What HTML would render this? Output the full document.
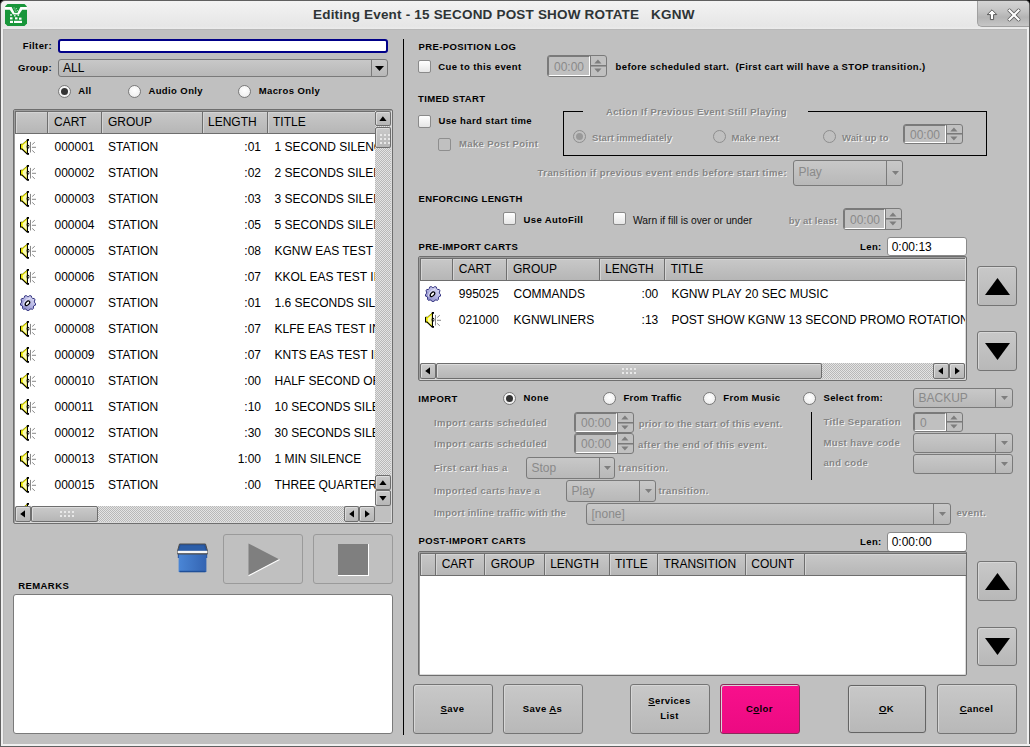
<!DOCTYPE html>
<html><head><meta charset="utf-8">
<style>
*{margin:0;padding:0;box-sizing:border-box}
html,body{width:1030px;height:747px;overflow:hidden;background:#c0c0c0;font-family:"Liberation Sans",sans-serif}
.a{position:absolute}
.t{position:absolute;white-space:nowrap;line-height:1;color:#000}
.b11{font-weight:bold;font-size:11px}
.b10{font-weight:bold;font-size:10px}
.r12{font-size:12px}
.dis{color:#858585;text-shadow:1px 1px 0 #f2f2f2}
.cb{position:absolute;width:13px;height:13px;border:1px solid #8a8a8a;border-radius:2px;background:linear-gradient(#fff,#e6e6e6)}
.cb.d{background:#c0c0c0;border-color:#8e8e8e}
.rd{position:absolute;width:13px;height:13px;border:1px solid #7a7a7a;border-radius:50%;background:radial-gradient(circle at 50% 40%,#fff 0,#f2f2f2 60%,#dcdcdc 100%)}
.rd.on::after{content:"";position:absolute;left:2px;top:2px;width:7px;height:7px;border-radius:50%;background:#333}
.rd.d{border-color:#8e8e8e;background:#c0c0c0}
.rd.d.on::after{background:#999;left:2px;top:2px}
.btn{position:absolute;border:1px solid #747474;border-radius:3px;background:linear-gradient(#c8c8c8,#b8b8b8);box-shadow:inset 1px 1px 0 #d6d6d6}
.spin{position:absolute;border:1px solid #7a7a7a;border-radius:3px;background:#c0c0c0}
.spin .f{position:absolute;left:0;top:0;bottom:0;border-left:1px solid #7a7a7a;border-top:1px solid #7a7a7a;border-bottom:1px solid #fff;border-right:1px solid #fff;border-radius:2px 0 0 2px;background:#c0c0c0}
.combo{position:absolute;border:1px solid #7a7a7a;border-radius:3px;background:linear-gradient(#c8c8c8,#b8b8b8)}
.combo .dv{position:absolute;top:0;bottom:0;width:1px;background:#7a7a7a}
.tbl{position:absolute;border:1px solid #6e6e6e;border-radius:2px;background:#fff;box-shadow:inset 1px 1px 0 #9c9c9c,inset -1px -1px 0 #dadada}
.hdr{position:absolute;background:linear-gradient(#c8c8c8,#b6b6b6);border-top:1px solid #6e6e6e;border-left:1px solid #6e6e6e;border-bottom:1px solid #6e6e6e;box-shadow:inset 1px 1px 0 #d4d4d4}
.hd{position:absolute;width:2px;border-left:1px solid #6e6e6e;border-right:1px solid #d4d4d4}
.hatch{background-color:#d0d0d0;background-image:repeating-conic-gradient(#b8b8b8 0 25%,#e4e4e4 0 50%);background-size:2px 2px}
.sep{position:absolute;background:#000}
.sb{position:absolute;border:1px solid #6e6e6e;border-radius:2px;background:linear-gradient(#cacaca,#b6b6b6);box-shadow:inset 1px 1px 0 #dcdcdc}
.grip{position:absolute;background-image:radial-gradient(circle,#e8e8e8 0.8px,transparent 1.1px);background-size:4px 4px}
.tc{font-size:12px}
.th{font-size:12px}
.flat{background:#c0c0c0;border-color:#9a9a9a;box-shadow:none}
</style></head><body>
<!-- window chrome -->
<div class="a" style="left:0;top:0;width:1030px;height:747px;background:#c0c0c0"></div>
<div class="a" style="left:0;top:0;width:6px;height:6px;background:#000"></div>
<div class="a" style="left:1024px;top:0;width:6px;height:6px;background:#000"></div>
<div class="a" style="left:0;top:0;width:1030px;height:29px;background:linear-gradient(#f3f3f3,#e6e6e6 90%,#ececec);border-top:1px solid #606060;border-left:1px solid #606060;border-right:1px solid #606060;border-radius:5px 5px 0 0"></div>
<div class="a" style="left:0;top:29px;width:3px;height:718px;background:linear-gradient(90deg,#606060 0,#606060 1px,#f0f0f0 1px,#ececec 3px)"></div>
<div class="a" style="left:3px;top:29px;width:1px;height:715px;background:#b8b8b8"></div>
<div class="a" style="left:3px;top:29px;width:1024px;height:1px;background:#b8b8b8"></div>
<div class="a" style="left:1027px;top:27px;width:3px;height:720px;background:linear-gradient(90deg,#f0f0f0 0,#f0f0f0 2px,#606060 2px)"></div>
<div class="a" style="left:0;top:744px;width:1030px;height:3px;background:linear-gradient(#f0f0f0 0,#f0f0f0 2px,#606060 2px)"></div>
<div class="a" style="left:0;top:29px;width:1px;height:718px;background:#606060"></div>
<div class="a" style="left:977px;top:1px;width:52px;height:26px;border-radius:0 4px 0 5px;background:linear-gradient(#d4d4d4,#c4c4c4 40%,#b4b4b4 65%,#c6c6c6);border-left:1px solid #a0a0a0;border-bottom:1px solid #a0a0a0"></div>

<svg width="0" height="0" style="position:absolute">
<defs>
<symbol id="spk" viewBox="0 0 16 16">
<path d="M0.5 5 H2.5 L7.5 0.8 V15.2 L2.5 10.5 H0.5Z" fill="#f4f000"/>
<path d="M2.8 6.2 L6.8 3 V13 L2.8 9.6Z" fill="#fbfbb8"/>
<path d="M0.5 5 V10 H2 L7.5 15.3" stroke="#000" stroke-width="1.1" fill="none"/>
<path d="M0.5 5 H2.5 L7.5 0.8" stroke="#6a6a00" stroke-width="0.7" fill="none"/>
<rect x="6.8" y="0" width="2.2" height="1.8" fill="#000"/>
<rect x="7.2" y="14" width="1.8" height="1.8" fill="#000"/>
<rect x="6.9" y="1" width="1.1" height="14" fill="#000"/>
<ellipse cx="8" cy="7.7" rx="1.4" ry="1.9" fill="#000"/><ellipse cx="8.3" cy="7.7" rx="0.5" ry="0.8" fill="#fff"/>
<rect x="10.1" y="2.9" width="0.9" height="10.6" fill="#7a7a7a"/>
<path d="M12.2 5.5 L14.8 3.2 M12 8.3 H16 M12.2 11.4 L14.8 13.8" stroke="#7a7a7a" stroke-width="0.9"/>
</symbol>
<symbol id="gear" viewBox="0 0 16 16">
<defs><linearGradient id="gg" x1="1" y1="0" x2="0" y2="1"><stop offset="0" stop-color="#e4e4f8"/><stop offset="0.45" stop-color="#b8b8e4"/><stop offset="1" stop-color="#7c7cc0"/></linearGradient></defs>
<path d="M14.59 7.68 L15.68 8.48 L15.39 10.17 L14.08 10.56 L13.26 11.99 L13.58 13.31 L12.26 14.41 L11.02 13.87 L9.46 14.44 L8.86 15.65 L7.14 15.65 L6.54 14.44 L4.98 13.87 L3.74 14.41 L2.42 13.31 L2.74 11.99 L1.92 10.56 L0.61 10.17 L0.32 8.48 L1.41 7.68 L1.70 6.05 L0.94 4.92 L1.80 3.43 L3.16 3.52 L4.42 2.45 L4.58 1.10 L6.19 0.52 L7.17 1.45 L8.83 1.45 L9.81 0.52 L11.42 1.10 L11.58 2.45 L12.84 3.52 L14.20 3.43 L15.06 4.92 L14.30 6.05Z" fill="url(#gg)" stroke="#30307e" stroke-width="1" stroke-linejoin="round"/>
<path d="M3.5 10.5 Q4 4.5 10 3.5" stroke="#e8e8fa" stroke-width="1" fill="none"/>
<ellipse cx="7.5" cy="8.3" rx="2.7" ry="1.6" transform="rotate(-45 7.5 8.3)" fill="#fff" stroke="#000" stroke-width="1.2"/>
</symbol>
<symbol id="upa" viewBox="0 0 10 6"><path d="M0 6 L5 0 L10 6Z" fill="#000"/></symbol>
</defs></svg>
<!-- app icon -->
<svg class="a" style="left:5px;top:4px" width="22" height="22" viewBox="0 0 22 22">
<path d="M2.5 0 H19.5 L22 2.5 V19.5 L19.5 22 H2.5 L0 19.5 V2.5Z" fill="#18963a"/>
<path d="M0 3 H6.6 L9.6 9 H12.4 L15.4 3 H22 V5.8 H17.2 L14 10.4 H8 L4.8 5.8 H0Z" fill="#fff"/>
<path d="M8.6 4 h1 M10.8 4.6 h1 M9.6 6 h1 M11.8 6.6 h1 M10.4 7.8 h1" stroke="#c8eccc" stroke-width="1"/>
<rect x="5" y="10.3" width="2" height="1.3" fill="#fff"/><rect x="9" y="11.2" width="1.6" height="1.2" fill="#fff"/><rect x="12.5" y="10.6" width="1.6" height="1.2" fill="#fff"/>
<rect x="5" y="13.3" width="2.5" height="2.1" fill="#fff"/><rect x="10" y="13.3" width="2.5" height="2.1" fill="#fff"/><rect x="14" y="13.6" width="2.5" height="2.1" fill="#fff"/>
<rect x="5" y="16.8" width="3" height="2.2" fill="#fff"/><rect x="9" y="16.8" width="8" height="2.2" fill="#fff"/>
</svg>
<!-- title buttons glyphs -->
<svg class="a" style="left:986px;top:9px" width="12" height="12" viewBox="0 0 12 12">
<path d="M6 0.8 L10.8 5.6 L7.6 5.6 L7.6 10.6 L4.4 10.6 L4.4 5.6 L1.2 5.6 Z" fill="#fff" stroke="#5a5a5a" stroke-width="1" stroke-linejoin="round"/>
</svg>
<svg class="a" style="left:1007px;top:8px" width="14" height="14" viewBox="0 0 14 14">
<path d="M2.5 2.5 L11.5 11.5 M11.5 2.5 L2.5 11.5" stroke="#5a5a5a" stroke-width="3.8" stroke-linecap="round"/>
<path d="M2.5 2.5 L11.5 11.5 M11.5 2.5 L2.5 11.5" stroke="#fff" stroke-width="2.2" stroke-linecap="square"/>
</svg>

<!-- LEFT PANEL -->
<div class="a" style="left:58px;top:39px;width:330px;height:14px;border:2px solid #000088;border-radius:3px;background:#fff"></div>
<div class="combo" style="left:58px;top:59px;width:330px;height:18px"><div class="dv" style="left:312px"></div></div>
<svg class="a" style="left:375px;top:66px" width="9" height="5"><path d="M0 0 H9 L4.5 5Z" fill="#000"/></svg>

<div class="rd on" style="left:58px;top:85px"></div>
<div class="rd" style="left:128px;top:85px"></div>
<div class="rd" style="left:238px;top:85px"></div>

<div class="tbl" style="left:13px;top:109px;width:380px;height:415px"></div>
<div class="a" style="left:0;top:0;width:375px;height:506px;overflow:hidden">
<div class="hdr" style="left:15px;top:111px;width:370px;height:23px"></div>
<div class="hd" style="left:47px;top:112px;height:21px"></div>
<div class="hd" style="left:101px;top:112px;height:21px"></div>
<div class="hd" style="left:202px;top:112px;height:21px"></div>
<div class="hd" style="left:267px;top:112px;height:21px"></div>
<div class="t th" style="left:54px;top:116px">CART</div>
<div class="t th" style="left:108px;top:116px">GROUP</div>
<div class="t th" style="left:208px;top:116px">LENGTH</div>
<div class="t th" style="left:273px;top:116px">TITLE</div>
</div>

<div class="a" style="left:0;top:0;width:375px;height:506px;overflow:hidden">
<svg class="a" style="left:20px;top:139px" width="16" height="16"><use href="#spk"/></svg>
<div class="t tc" style="left:54.5px;top:140.54px">000001</div>
<div class="t tc" style="left:108px;top:140.54px">STATION</div>
<div class="t tc" style="left:161px;width:100px;text-align:right;top:140.54px">:01</div>
<div class="t tc" style="left:274.5px;top:140.54px">1 SECOND SILENCE</div>
<svg class="a" style="left:20px;top:165px" width="16" height="16"><use href="#spk"/></svg>
<div class="t tc" style="left:54.5px;top:166.54px">000002</div>
<div class="t tc" style="left:108px;top:166.54px">STATION</div>
<div class="t tc" style="left:161px;width:100px;text-align:right;top:166.54px">:02</div>
<div class="t tc" style="left:274.5px;top:166.54px">2 SECONDS SILENCE</div>
<svg class="a" style="left:20px;top:191px" width="16" height="16"><use href="#spk"/></svg>
<div class="t tc" style="left:54.5px;top:192.54px">000003</div>
<div class="t tc" style="left:108px;top:192.54px">STATION</div>
<div class="t tc" style="left:161px;width:100px;text-align:right;top:192.54px">:03</div>
<div class="t tc" style="left:274.5px;top:192.54px">3 SECONDS SILENCE</div>
<svg class="a" style="left:20px;top:217px" width="16" height="16"><use href="#spk"/></svg>
<div class="t tc" style="left:54.5px;top:218.54px">000004</div>
<div class="t tc" style="left:108px;top:218.54px">STATION</div>
<div class="t tc" style="left:161px;width:100px;text-align:right;top:218.54px">:05</div>
<div class="t tc" style="left:274.5px;top:218.54px">5 SECONDS SILENCE</div>
<svg class="a" style="left:20px;top:243px" width="16" height="16"><use href="#spk"/></svg>
<div class="t tc" style="left:54.5px;top:244.54px">000005</div>
<div class="t tc" style="left:108px;top:244.54px">STATION</div>
<div class="t tc" style="left:161px;width:100px;text-align:right;top:244.54px">:08</div>
<div class="t tc" style="left:274.5px;top:244.54px">KGNW EAS TEST</div>
<svg class="a" style="left:20px;top:269px" width="16" height="16"><use href="#spk"/></svg>
<div class="t tc" style="left:54.5px;top:270.54px">000006</div>
<div class="t tc" style="left:108px;top:270.54px">STATION</div>
<div class="t tc" style="left:161px;width:100px;text-align:right;top:270.54px">:07</div>
<div class="t tc" style="left:274.5px;top:270.54px">KKOL EAS TEST IN</div>
<svg class="a" style="left:20px;top:295px" width="16" height="16"><use href="#gear"/></svg>
<div class="t tc" style="left:54.5px;top:296.54px">000007</div>
<div class="t tc" style="left:108px;top:296.54px">STATION</div>
<div class="t tc" style="left:161px;width:100px;text-align:right;top:296.54px">:01</div>
<div class="t tc" style="left:274.5px;top:296.54px">1.6 SECONDS SILENCE</div>
<svg class="a" style="left:20px;top:321px" width="16" height="16"><use href="#spk"/></svg>
<div class="t tc" style="left:54.5px;top:322.54px">000008</div>
<div class="t tc" style="left:108px;top:322.54px">STATION</div>
<div class="t tc" style="left:161px;width:100px;text-align:right;top:322.54px">:07</div>
<div class="t tc" style="left:274.5px;top:322.54px">KLFE EAS TEST IN</div>
<svg class="a" style="left:20px;top:347px" width="16" height="16"><use href="#spk"/></svg>
<div class="t tc" style="left:54.5px;top:348.54px">000009</div>
<div class="t tc" style="left:108px;top:348.54px">STATION</div>
<div class="t tc" style="left:161px;width:100px;text-align:right;top:348.54px">:07</div>
<div class="t tc" style="left:274.5px;top:348.54px">KNTS EAS TEST IN</div>
<svg class="a" style="left:20px;top:373px" width="16" height="16"><use href="#spk"/></svg>
<div class="t tc" style="left:54.5px;top:374.54px">000010</div>
<div class="t tc" style="left:108px;top:374.54px">STATION</div>
<div class="t tc" style="left:161px;width:100px;text-align:right;top:374.54px">:00</div>
<div class="t tc" style="left:274.5px;top:374.54px">HALF SECOND OF</div>
<svg class="a" style="left:20px;top:399px" width="16" height="16"><use href="#spk"/></svg>
<div class="t tc" style="left:54.5px;top:400.54px">000011</div>
<div class="t tc" style="left:108px;top:400.54px">STATION</div>
<div class="t tc" style="left:161px;width:100px;text-align:right;top:400.54px">:10</div>
<div class="t tc" style="left:274.5px;top:400.54px">10 SECONDS SILENCE</div>
<svg class="a" style="left:20px;top:425px" width="16" height="16"><use href="#spk"/></svg>
<div class="t tc" style="left:54.5px;top:426.54px">000012</div>
<div class="t tc" style="left:108px;top:426.54px">STATION</div>
<div class="t tc" style="left:161px;width:100px;text-align:right;top:426.54px">:30</div>
<div class="t tc" style="left:274.5px;top:426.54px">30 SECONDS SILENCE</div>
<svg class="a" style="left:20px;top:451px" width="16" height="16"><use href="#spk"/></svg>
<div class="t tc" style="left:54.5px;top:452.54px">000013</div>
<div class="t tc" style="left:108px;top:452.54px">STATION</div>
<div class="t tc" style="left:161px;width:100px;text-align:right;top:452.54px">1:00</div>
<div class="t tc" style="left:274.5px;top:452.54px">1 MIN SILENCE</div>
<svg class="a" style="left:20px;top:477px" width="16" height="16"><use href="#spk"/></svg>
<div class="t tc" style="left:54.5px;top:478.54px">000015</div>
<div class="t tc" style="left:108px;top:478.54px">STATION</div>
<div class="t tc" style="left:161px;width:100px;text-align:right;top:478.54px">:00</div>
<div class="t tc" style="left:274.5px;top:478.54px">THREE QUARTER</div>
<svg class="a" style="left:20px;top:503px" width="16" height="16"><use href="#spk"/></svg>
</div>
<!-- left table scrollbars -->
<div class="a hatch" style="left:375px;top:111px;width:16px;height:395px"></div>
<div class="sb" style="left:375px;top:111px;width:16px;height:15px"><svg class="a" style="left:3px;top:4px" width="8" height="5"><path d="M0.3 5 L3.9 0.2 L7.5 5Z" fill="#000"/></svg></div>
<div class="sb" style="left:375px;top:127px;width:16px;height:21px"><div class="grip" style="left:3px;top:5px;width:11px;height:11px"></div></div>
<div class="sb" style="left:375px;top:475px;width:16px;height:15px"><svg class="a" style="left:3px;top:4px" width="8" height="5"><path d="M0.3 5 L3.9 0.2 L7.5 5Z" fill="#000"/></svg></div>
<div class="sb" style="left:375px;top:490px;width:16px;height:16px"><svg class="a" style="left:3px;top:5px" width="8" height="5"><path d="M0.3 0 L3.9 4.8 L7.5 0Z" fill="#000"/></svg></div>
<div class="a hatch" style="left:15px;top:506px;width:360px;height:16px"></div>
<div class="sb" style="left:15px;top:506px;width:16px;height:16px"><svg class="a" style="left:4px;top:3px" width="5" height="8"><path d="M5 0.3 L0.2 3.9 L5 7.5Z" fill="#000"/></svg></div>
<div class="sb" style="left:31px;top:506px;width:67px;height:16px"><div class="grip" style="left:27px;top:3px;width:17px;height:9px"></div></div>
<div class="sb" style="left:344px;top:506px;width:15px;height:16px"><svg class="a" style="left:4px;top:3px" width="5" height="8"><path d="M5 0.3 L0.2 3.9 L5 7.5Z" fill="#000"/></svg></div>
<div class="sb" style="left:359px;top:506px;width:16px;height:16px"><svg class="a" style="left:5px;top:3px" width="5" height="8"><path d="M0 0.3 L4.8 3.9 L0 7.5Z" fill="#000"/></svg></div>
<div class="a" style="left:375px;top:506px;width:16px;height:16px;background:#c0c0c0"></div>

<!-- trash -->
<svg class="a" style="left:174px;top:538px" width="38" height="40" viewBox="0 0 38 40">
<defs><linearGradient id="tg" x1="0" y1="0" x2="1" y2="0"><stop offset="0" stop-color="#4a86d6"/><stop offset="1" stop-color="#3464b2"/></linearGradient></defs>
<rect x="4.6" y="15.5" width="27.8" height="18.5" fill="url(#tg)"/>
<rect x="5.5" y="32.8" width="26" height="1.5" fill="#1f4f98"/>
<rect x="3.8" y="15.5" width="1.2" height="4.5" fill="#2a5aa8"/><rect x="32" y="15.5" width="1.2" height="4.5" fill="#2a5aa8"/>
<path d="M5.5 6 H31.5 L33.5 13 V15.8 H3.5 V13Z" fill="#24539c" stroke="#4e4e4e" stroke-width="1"/>
<path d="M6.5 7.5 H30 L31.5 12.5 H5Z" fill="#2c5ea8"/>
<rect x="3.6" y="12.8" width="29.8" height="2.6" fill="#f6f6f6"/>
<rect x="3.6" y="15.4" width="29.8" height="0.9" fill="#4e4e4e"/>
</svg>
<!-- play / stop -->
<div class="btn flat" style="left:223px;top:534px;width:80px;height:50px"></div>
<svg class="a" style="left:248px;top:543px" width="33" height="34" viewBox="0 0 33 34">
<path d="M0.5 0.5 L31.5 16.5 L0.5 32.5Z" fill="#7f7f7f"/>
<path d="M0.5 32.8 L31.5 16.5" stroke="#fff" stroke-width="1.2"/>
</svg>
<div class="btn flat" style="left:313px;top:534px;width:80px;height:50px"></div>
<div class="a" style="left:338px;top:544px;width:31px;height:32px;background:#7f7f7f;border-right:1px solid #fff;border-bottom:1px solid #fff"></div>

<div class="a" style="left:13px;top:594px;width:380px;height:140px;border:1px solid #7a7a7a;border-radius:3px;background:#fff"></div>

<!-- separator -->
<div class="sep" style="left:403px;top:39px;width:1px;height:696px"></div>

<div class="t " style="top:7.87px;font-size:13.5px;letter-spacing:0.19px;font-weight:bold;left:313px;color:#2e3436">Editing Event - 15 SECOND POST SHOW ROTATE &nbsp;&nbsp;KGNW</div>
<div class="t " style="top:40.66px;font-size:9.5px;letter-spacing:0.4px;font-weight:bold;left:-248px;width:300px;text-align:right;">Filter:</div>
<div class="t " style="top:62.66px;font-size:9.5px;letter-spacing:0.4px;font-weight:bold;left:-248px;width:300px;text-align:right;">Group:</div>
<div class="t " style="top:61.64px;font-size:12px;left:63px;">ALL</div>
<div class="t " style="top:85.76px;font-size:9.5px;letter-spacing:0.4px;font-weight:bold;left:78.3px;">All</div>
<div class="t " style="top:85.76px;font-size:9.5px;letter-spacing:0.4px;font-weight:bold;left:148.4px;">Audio Only</div>
<div class="t " style="top:85.76px;font-size:9.5px;letter-spacing:0.4px;font-weight:bold;left:258.7px;">Macros Only</div>
<div class="t " style="top:580.66px;font-size:9.5px;letter-spacing:0.4px;font-weight:bold;left:18.3px;">REMARKS</div>
<div class="t " style="top:41.96px;font-size:9.5px;letter-spacing:0.4px;font-weight:bold;left:418.5px;">PRE-POSITION LOG</div>
<div class="cb" style="left:418px;top:60px"></div>
<div class="t " style="top:62.36px;font-size:9.5px;letter-spacing:0.4px;font-weight:bold;left:438.2px;">Cue to this event</div>
<div class="spin" style="left:547px;top:55px;width:60px;height:22px"><div class="f" style="width:42px"></div><div class="a" style="left:42px;top:0;width:1px;height:20px;background:#7a7a7a"></div><div class="a" style="left:43px;top:9.0px;width:15px;height:2px;background:linear-gradient(#7a7a7a 50%,#9a9a9a 50%)"></div><svg class="a" style="left:46px;top:2.8px" width="8" height="5"><path d="M0.3 4.5 L3.9 0.5 L7.5 4.5Z" fill="#7e7e7e"/></svg><svg class="a" style="left:46px;top:12.0px" width="8" height="5"><path d="M0.3 0.5 L3.9 4.5 L7.5 0.5Z" fill="#7e7e7e"/></svg></div><div class="t " style="top:60.84px;font-size:12px;left:554px;color:#8a8a8a">00:00</div>
<div class="t " style="top:61.96px;font-size:9.5px;letter-spacing:0.4px;font-weight:bold;left:615.6px;">before scheduled start.&nbsp; (First cart will have a STOP transition.)</div>
<div class="t " style="top:93.96px;font-size:9.5px;letter-spacing:0.4px;font-weight:bold;left:418px;">TIMED START</div>
<div class="cb" style="left:418px;top:115px"></div>
<div class="t " style="top:115.96px;font-size:9.5px;letter-spacing:0.4px;font-weight:bold;left:438.4px;">Use hard start time</div>
<div class="cb d" style="left:438px;top:138px"></div>
<div class="t dis" style="top:139.46px;font-size:9.5px;letter-spacing:0.4px;font-weight:bold;left:458.9px;">Make Post Point</div>
<div class="a" style="left:563px;top:111px;width:424px;height:45px;border:1px solid #000;border-top:none"></div>
<div class="a" style="left:563px;top:111px;width:20px;height:1px;background:#000"></div>
<div class="a" style="left:808px;top:111px;width:179px;height:1px;background:#000"></div>
<div class="t dis" style="top:106.76px;font-size:9.5px;letter-spacing:0.4px;font-weight:bold;left:605.9px;">Action If Previous Event Still Playing</div>
<div class="rd on d" style="left:572.9px;top:129.8px"></div>
<div class="t dis" style="top:132.56px;font-size:9.5px;letter-spacing:0.05px;font-weight:bold;left:592px;">Start immediately</div>
<div class="rd d" style="left:712.7px;top:129.8px"></div>
<div class="t dis" style="top:132.56px;font-size:9.5px;letter-spacing:0.15px;font-weight:bold;left:731.5px;">Make next</div>
<div class="rd d" style="left:823.1px;top:129.8px"></div>
<div class="t dis" style="top:132.56px;font-size:9.5px;letter-spacing:0.1px;font-weight:bold;left:842px;">Wait up to</div>
<div class="spin" style="left:903px;top:124px;width:60px;height:20px"><div class="f" style="width:42px"></div><div class="a" style="left:42px;top:0;width:1px;height:18px;background:#7a7a7a"></div><div class="a" style="left:43px;top:8.0px;width:15px;height:2px;background:linear-gradient(#7a7a7a 50%,#9a9a9a 50%)"></div><svg class="a" style="left:46px;top:1.7999999999999998px" width="8" height="5"><path d="M0.3 4.5 L3.9 0.5 L7.5 4.5Z" fill="#7e7e7e"/></svg><svg class="a" style="left:46px;top:11.0px" width="8" height="5"><path d="M0.3 0.5 L3.9 4.5 L7.5 0.5Z" fill="#7e7e7e"/></svg></div><div class="t " style="top:128.84px;font-size:12px;left:910px;color:#8a8a8a">00:00</div>
<div class="t dis" style="top:168.46px;font-size:9.5px;letter-spacing:0.4px;font-weight:bold;left:487px;width:300px;text-align:right;">Transition if previous event ends before start time:</div>
<div class="combo" style="left:793px;top:160px;width:110px;height:26px"><div class="dv" style="left:92px"></div></div><svg class="a" style="left:891.5px;top:170.7px" width="7" height="4"><path d="M0 0 H7 L3.5 4Z" fill="#7e7e7e"/></svg><div class="t " style="top:165.94px;font-size:12px;left:798.5px;color:#8a8a8a">Play</div>
<div class="t " style="top:193.96px;font-size:9.5px;letter-spacing:0.33px;font-weight:bold;left:418.6px;">ENFORCING LENGTH</div>
<div class="cb" style="left:503px;top:212px"></div>
<div class="t " style="top:214.96px;font-size:9.5px;letter-spacing:0.4px;font-weight:bold;left:523.5px;">Use AutoFill</div>
<div class="cb" style="left:613px;top:212px"></div>
<div class="t " style="top:216.28px;font-size:10.3px;left:633px;color:#111">Warn if fill is over or under</div>
<div class="t dis" style="top:216.26px;font-size:9.5px;letter-spacing:0.2px;font-weight:bold;left:788.7px;">by at least</div>
<div class="spin" style="left:843px;top:208px;width:59px;height:22px"><div class="f" style="width:41px"></div><div class="a" style="left:41px;top:0;width:1px;height:20px;background:#7a7a7a"></div><div class="a" style="left:42px;top:9.0px;width:15px;height:2px;background:linear-gradient(#7a7a7a 50%,#9a9a9a 50%)"></div><svg class="a" style="left:45px;top:2.8px" width="8" height="5"><path d="M0.3 4.5 L3.9 0.5 L7.5 4.5Z" fill="#7e7e7e"/></svg><svg class="a" style="left:45px;top:12.0px" width="8" height="5"><path d="M0.3 0.5 L3.9 4.5 L7.5 0.5Z" fill="#7e7e7e"/></svg></div><div class="t " style="top:213.84px;font-size:12px;left:850px;color:#8a8a8a">00:00</div>
<div class="t " style="top:241.96px;font-size:9.5px;letter-spacing:0.28px;font-weight:bold;left:418.6px;">PRE-IMPORT CARTS</div>
<div class="t " style="top:241.96px;font-size:9.5px;letter-spacing:0.4px;font-weight:bold;left:860px;">Len:</div>
<div class="a" style="left:887px;top:237px;width:80px;height:19px;border:1px solid #8a8a8a;border-radius:3px;background:#fff"></div>
<div class="t " style="top:240.84px;font-size:12px;left:891.7px;">0:00:13</div>
<div class="tbl" style="left:418px;top:256px;width:549px;height:125px"></div>
<div class="a" style="left:0;top:0;width:965px;height:363px;overflow:hidden">
<div class="hdr" style="left:420px;top:258px;width:546px;height:23px"></div>
<div class="hd" style="left:452px;top:259px;height:21px"></div>
<div class="hd" style="left:506px;top:259px;height:21px"></div>
<div class="hd" style="left:599px;top:259px;height:21px"></div>
<div class="hd" style="left:664px;top:259px;height:21px"></div>
<div class="t th" style="top:262.84px;font-size:12px;left:458.8px;">CART</div>
<div class="t th" style="top:262.84px;font-size:12px;left:513px;">GROUP</div>
<div class="t th" style="top:262.84px;font-size:12px;left:605px;">LENGTH</div>
<div class="t th" style="top:262.84px;font-size:12px;left:670.7px;">TITLE</div>
<svg class="a" style="left:425px;top:286px" width="16" height="16"><use href="#gear"/></svg>
<svg class="a" style="left:425px;top:312px" width="16" height="16"><use href="#spk"/></svg>
<div class="t " style="top:287.54px;font-size:12px;left:458.8px;">995025</div>
<div class="t " style="top:287.54px;font-size:12px;left:513.6px;">COMMANDS</div>
<div class="t " style="top:287.54px;font-size:12px;left:358.29999999999995px;width:300px;text-align:right;">:00</div>
<div class="t " style="top:287.54px;font-size:12px;left:671.4px;">KGNW PLAY 20 SEC MUSIC</div>
<div class="t " style="top:313.54px;font-size:12px;left:458.8px;">021000</div>
<div class="t " style="top:313.54px;font-size:12px;left:513.6px;">KGNWLINERS</div>
<div class="t " style="top:313.54px;font-size:12px;left:358.29999999999995px;width:300px;text-align:right;">:13</div>
<div class="t " style="top:313.54px;font-size:12px;left:671.4px;">POST SHOW KGNW 13 SECOND PROMO ROTATION</div>
</div>
<div class="a hatch" style="left:420px;top:363px;width:545px;height:16px"></div>
<div class="sb" style="left:420px;top:363px;width:16px;height:16px"><svg class="a" style="left:4px;top:3px" width="5" height="8"><path d="M5 0.3 L0.2 3.9 L5 7.5Z" fill="#000"/></svg></div>
<div class="sb" style="left:436px;top:363px;width:386px;height:16px"><div class="grip" style="left:184px;top:3px;width:17px;height:9px"></div></div>
<div class="sb" style="left:933px;top:363px;width:16px;height:16px"><svg class="a" style="left:4px;top:3px" width="5" height="8"><path d="M5 0.3 L0.2 3.9 L5 7.5Z" fill="#000"/></svg></div>
<div class="sb" style="left:949px;top:363px;width:16px;height:16px"><svg class="a" style="left:5px;top:3px" width="5" height="8"><path d="M0 0.3 L4.8 3.9 L0 7.5Z" fill="#000"/></svg></div>
<div class="btn " style="left:977px;top:266px;width:40px;height:40px;"></div>
<svg class="a" style="left:985px;top:278px" width="25" height="17"><path d="M0 17 L12.5 0 L25 17Z" fill="#000"/></svg>
<div class="btn " style="left:977px;top:331px;width:40px;height:40px;"></div>
<svg class="a" style="left:985px;top:343px" width="25" height="17"><path d="M0 0 L12.5 17 L25 0Z" fill="#000"/></svg>
<div class="t " style="top:393.96px;font-size:9.5px;letter-spacing:0.4px;font-weight:bold;left:418.3px;">IMPORT</div>
<div class="rd on" style="left:503.1px;top:391.8px"></div>
<div class="t " style="top:392.96px;font-size:9.5px;letter-spacing:0.4px;font-weight:bold;left:523.5px;">None</div>
<div class="rd" style="left:603.0px;top:391.8px"></div>
<div class="t " style="top:392.96px;font-size:9.5px;letter-spacing:0.3px;font-weight:bold;left:623.4px;">From Traffic</div>
<div class="rd" style="left:702.7px;top:391.8px"></div>
<div class="t " style="top:392.96px;font-size:9.5px;letter-spacing:0.4px;font-weight:bold;left:723.2px;">From Music</div>
<div class="rd" style="left:802.5px;top:391.8px"></div>
<div class="t " style="top:392.96px;font-size:9.5px;letter-spacing:0.4px;font-weight:bold;left:823.4px;">Select from:</div>
<div class="combo" style="left:913px;top:388px;width:100px;height:20px"><div class="dv" style="left:81px"></div></div><svg class="a" style="left:1001.0px;top:395.7px" width="7" height="4"><path d="M0 0 H7 L3.5 4Z" fill="#7e7e7e"/></svg><div class="t " style="top:392.14px;font-size:12px;left:918.5px;color:#8a8a8a">BACKUP</div>
<div class="t dis" style="top:417.96px;font-size:9.5px;letter-spacing:0.4px;font-weight:bold;left:434px;">Import carts scheduled</div>
<div class="t dis" style="top:439.16px;font-size:9.5px;letter-spacing:0.4px;font-weight:bold;left:434px;">Import carts scheduled</div>
<div class="spin" style="left:574px;top:412px;width:60px;height:21px"><div class="f" style="width:42px"></div><div class="a" style="left:42px;top:0;width:1px;height:19px;background:#7a7a7a"></div><div class="a" style="left:43px;top:8.5px;width:15px;height:2px;background:linear-gradient(#7a7a7a 50%,#9a9a9a 50%)"></div><svg class="a" style="left:46px;top:2.3px" width="8" height="5"><path d="M0.3 4.5 L3.9 0.5 L7.5 4.5Z" fill="#7e7e7e"/></svg><svg class="a" style="left:46px;top:11.5px" width="8" height="5"><path d="M0.3 0.5 L3.9 4.5 L7.5 0.5Z" fill="#7e7e7e"/></svg></div><div class="t " style="top:417.34px;font-size:12px;left:581px;color:#8a8a8a">00:00</div>
<div class="spin" style="left:574px;top:433px;width:60px;height:21px"><div class="f" style="width:42px"></div><div class="a" style="left:42px;top:0;width:1px;height:19px;background:#7a7a7a"></div><div class="a" style="left:43px;top:8.5px;width:15px;height:2px;background:linear-gradient(#7a7a7a 50%,#9a9a9a 50%)"></div><svg class="a" style="left:46px;top:2.3px" width="8" height="5"><path d="M0.3 4.5 L3.9 0.5 L7.5 4.5Z" fill="#7e7e7e"/></svg><svg class="a" style="left:46px;top:11.5px" width="8" height="5"><path d="M0.3 0.5 L3.9 4.5 L7.5 0.5Z" fill="#7e7e7e"/></svg></div><div class="t " style="top:438.34px;font-size:12px;left:581px;color:#8a8a8a">00:00</div>
<div class="t dis" style="top:418.66px;font-size:9.5px;letter-spacing:0.27px;font-weight:bold;left:638.8px;">prior to the start of this event.</div>
<div class="t dis" style="top:439.66px;font-size:9.5px;letter-spacing:0.4px;font-weight:bold;left:638.1px;">after the end of this event.</div>
<div class="sep" style="left:811px;top:412px;width:1px;height:68px"></div>
<div class="t dis" style="top:417.16px;font-size:9.5px;letter-spacing:0.4px;font-weight:bold;left:823.4px;">Title Separation</div>
<div class="spin" style="left:913px;top:412px;width:50px;height:20px"><div class="f" style="width:32px"></div><div class="a" style="left:32px;top:0;width:1px;height:18px;background:#7a7a7a"></div><div class="a" style="left:33px;top:8.0px;width:15px;height:2px;background:linear-gradient(#7a7a7a 50%,#9a9a9a 50%)"></div><svg class="a" style="left:36px;top:1.7999999999999998px" width="8" height="5"><path d="M0.3 4.5 L3.9 0.5 L7.5 4.5Z" fill="#7e7e7e"/></svg><svg class="a" style="left:36px;top:11.0px" width="8" height="5"><path d="M0.3 0.5 L3.9 4.5 L7.5 0.5Z" fill="#7e7e7e"/></svg></div><div class="t " style="top:416.84px;font-size:12px;left:920px;color:#8a8a8a">0</div>
<div class="t dis" style="top:437.66px;font-size:9.5px;letter-spacing:0.4px;font-weight:bold;left:823.4px;">Must have code</div>
<div class="combo" style="left:913px;top:433px;width:100px;height:20px"><div class="dv" style="left:81px"></div></div><svg class="a" style="left:1001.0px;top:440.7px" width="7" height="4"><path d="M0 0 H7 L3.5 4Z" fill="#7e7e7e"/></svg>
<div class="t dis" style="top:458.46px;font-size:9.5px;letter-spacing:0.4px;font-weight:bold;left:823.4px;">and code</div>
<div class="combo" style="left:913px;top:454px;width:100px;height:20px"><div class="dv" style="left:81px"></div></div><svg class="a" style="left:1001.0px;top:461.7px" width="7" height="4"><path d="M0 0 H7 L3.5 4Z" fill="#7e7e7e"/></svg>
<div class="t dis" style="top:462.96px;font-size:9.5px;letter-spacing:0.4px;font-weight:bold;left:433.7px;">First cart has a</div>
<div class="combo" style="left:526px;top:457px;width:89px;height:22px"><div class="dv" style="left:72px"></div></div><svg class="a" style="left:604.0px;top:465.7px" width="7" height="4"><path d="M0 0 H7 L3.5 4Z" fill="#7e7e7e"/></svg><div class="t " style="top:461.74px;font-size:12px;left:531.5px;color:#8a8a8a">Stop</div>
<div class="t dis" style="top:463.36px;font-size:9.5px;letter-spacing:0.4px;font-weight:bold;left:618.3px;">transition.</div>
<div class="t dis" style="top:485.66px;font-size:9.5px;letter-spacing:0.4px;font-weight:bold;left:433.7px;">Imported carts have a</div>
<div class="combo" style="left:566px;top:480px;width:90px;height:22px"><div class="dv" style="left:72px"></div></div><svg class="a" style="left:644.5px;top:488.7px" width="7" height="4"><path d="M0 0 H7 L3.5 4Z" fill="#7e7e7e"/></svg><div class="t " style="top:484.74px;font-size:12px;left:571.5px;color:#8a8a8a">Play</div>
<div class="t dis" style="top:485.66px;font-size:9.5px;letter-spacing:0.4px;font-weight:bold;left:658.4px;">transition.</div>
<div class="t dis" style="top:508.36px;font-size:9.5px;letter-spacing:0.26px;font-weight:bold;left:433.7px;">Import inline traffic with the</div>
<div class="combo" style="left:586px;top:503px;width:365px;height:22px"><div class="dv" style="left:346px"></div></div><svg class="a" style="left:939.0px;top:511.7px" width="7" height="4"><path d="M0 0 H7 L3.5 4Z" fill="#7e7e7e"/></svg><div class="t " style="top:507.74px;font-size:12px;left:591.5px;color:#8a8a8a">[none]</div>
<div class="t dis" style="top:508.36px;font-size:9.5px;letter-spacing:0.4px;font-weight:bold;left:956.4px;">event.</div>
<div class="t " style="top:536.46px;font-size:9.5px;letter-spacing:0.4px;font-weight:bold;left:418.5px;">POST-IMPORT CARTS</div>
<div class="t " style="top:536.96px;font-size:9.5px;letter-spacing:0.4px;font-weight:bold;left:860px;">Len:</div>
<div class="a" style="left:887px;top:532px;width:80px;height:20px;border:1px solid #8a8a8a;border-radius:3px;background:#fff"></div>
<div class="t " style="top:536.34px;font-size:12px;left:891.7px;">0:00:00</div>
<div class="tbl" style="left:418px;top:551px;width:549px;height:125px"></div>
<div class="hdr" style="left:420px;top:553px;width:546px;height:23px"></div>
<div class="hd" style="left:435px;top:554px;height:21px"></div>
<div class="hd" style="left:484px;top:554px;height:21px"></div>
<div class="hd" style="left:544px;top:554px;height:21px"></div>
<div class="hd" style="left:609px;top:554px;height:21px"></div>
<div class="hd" style="left:657px;top:554px;height:21px"></div>
<div class="hd" style="left:745px;top:554px;height:21px"></div>
<div class="hd" style="left:804px;top:554px;height:21px"></div>
<div class="t th" style="top:557.84px;font-size:12px;left:441.7px;">CART</div>
<div class="t th" style="top:557.84px;font-size:12px;left:490.8px;">GROUP</div>
<div class="t th" style="top:557.84px;font-size:12px;left:550.2px;">LENGTH</div>
<div class="t th" style="top:557.84px;font-size:12px;left:615px;">TITLE</div>
<div class="t th" style="top:557.84px;font-size:12px;left:663.4px;">TRANSITION</div>
<div class="t th" style="top:557.84px;font-size:12px;left:751.3px;">COUNT</div>
<div class="btn " style="left:977px;top:561px;width:40px;height:40px;"></div>
<svg class="a" style="left:985px;top:573px" width="25" height="17"><path d="M0 17 L12.5 0 L25 17Z" fill="#000"/></svg>
<div class="btn " style="left:977px;top:627px;width:40px;height:39px;"></div>
<svg class="a" style="left:985px;top:638px" width="25" height="17"><path d="M0 0 L12.5 17 L25 0Z" fill="#000"/></svg>
<div class="btn " style="left:413px;top:684px;width:80px;height:50px;"></div>
<div class="t " style="top:703.96px;font-size:9.5px;letter-spacing:0.4px;font-weight:bold;left:412.5px;width:80px;text-align:center;"><u>S</u>ave</div>
<div class="btn " style="left:503px;top:684px;width:80px;height:50px;"></div>
<div class="t " style="top:703.96px;font-size:9.5px;letter-spacing:0.4px;font-weight:bold;left:502.5px;width:80px;text-align:center;">Save <u>A</u>s</div>
<div class="btn " style="left:630px;top:684px;width:80px;height:50px;"></div>
<div class="t " style="top:695.76px;font-size:9.5px;letter-spacing:0.4px;font-weight:bold;left:629.5px;width:80px;text-align:center;"><u>S</u>ervices</div>
<div class="t " style="top:710.56px;font-size:9.5px;letter-spacing:0.4px;font-weight:bold;left:629.5px;width:80px;text-align:center;">List</div>
<div class="btn " style="left:720px;top:684px;width:80px;height:50px;background:linear-gradient(#f8108c,#ec0a82);border-color:#8a2a5a"></div>
<div class="t " style="top:703.96px;font-size:9.5px;letter-spacing:0.4px;font-weight:bold;left:719.5px;width:80px;text-align:center;">C<u>o</u>lor</div>
<div class="btn " style="left:848px;top:685px;width:78px;height:48px;border-color:#646464;box-shadow:inset 1px 1px 0 #d6d6d6,0 0 1px 0 #9a9a9a"></div>
<div class="t " style="top:703.96px;font-size:9.5px;letter-spacing:0.4px;font-weight:bold;left:846.5px;width:80px;text-align:center;"><u>O</u>K</div>
<div class="btn " style="left:937px;top:684px;width:80px;height:50px;"></div>
<div class="t " style="top:703.96px;font-size:9.5px;letter-spacing:0.4px;font-weight:bold;left:936.5px;width:80px;text-align:center;"><u>C</u>ancel</div>
</body></html>
